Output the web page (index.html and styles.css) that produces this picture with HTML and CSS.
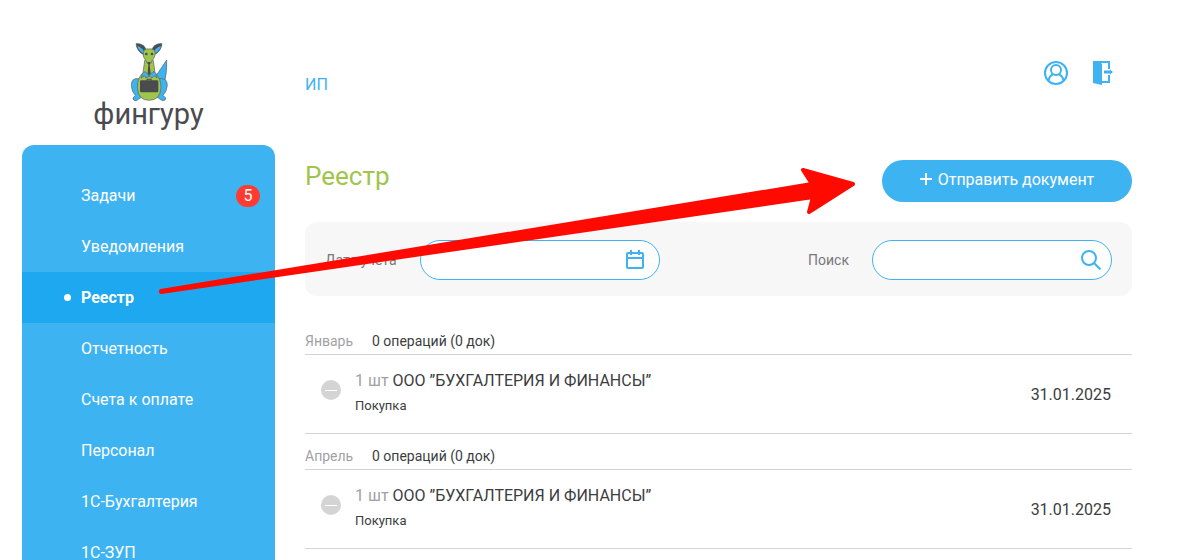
FILE: index.html
```
<!DOCTYPE html>
<html lang="ru">
<head>
    <meta charset="UTF-8">
    <meta name="viewport" content="width=device-width, initial-scale=1.0">
    <title>Реестр — Фингуру</title>
    <link rel="stylesheet" href="styles.css">
</head>
<body>
    <div class="page">
        <header class="header">
            <a class="logo" href="#">
                <svg class="logo-image" viewBox="0 0 138 198" aria-hidden="true">
                    <g stroke="#5a5d60" stroke-width="2" stroke-linejoin="round" stroke-linecap="round">
                        <path fill="#3eb3f2" d="M91 112 L122 66 Q124 96 116 132 Q106 136 96 124Z"/>
                        <path fill="#3eb3f2" d="M38 122 Q16 118 16 142 Q17 162 28 172 L21 180 Q20 188 31 188 L46 178Z"/>
                        <path fill="#3eb3f2" d="M100 122 Q124 118 124 142 Q122 162 111 172 L119 180 Q120 188 109 188 L94 178Z"/>
                        <path fill="#9fc54d" d="M56 68 L51 104 Q34 120 34 148 Q36 187 69 187 Q103 187 105 148 Q105 122 87 104 L82 68Z"/>
                        <path fill="#4a4b4f" d="M54 51 Q32 40 30 17 Q54 15 62 38Z"/>
                        <path fill="#4a4b4f" d="M84 51 Q106 40 108 17 Q84 15 76 38Z"/>
                        <path fill="#3eb3f2" stroke="none" d="M53 47 Q36 37 34 24 Q48 28 55 42Z"/>
                        <path fill="#3eb3f2" stroke="none" d="M86 47 Q103 37 105 24 Q90 28 83 42Z"/>
                        <path fill="#9fc54d" d="M51 46 Q54 30 69 33 Q85 30 88 46 Q87 60 78 68 Q76 78 69 78 Q62 78 60 68 Q51 60 51 46Z"/>
                        <path fill="#3eb3f2" d="M46 119 Q48 102 57 101 Q65 105 69 115 L60 120 L56 114Z"/>
                        <path fill="#3eb3f2" d="M93 119 Q91 102 82 101 Q74 105 70 115 L78 120 L83 114Z"/>
                    </g>
                    <g fill="#4a4b4f">
                        <circle cx="61" cy="48" r="4"/>
                        <circle cx="78" cy="48" r="4"/>
                        <path d="M64 72 H74 L71 80 L74 106 L69 113 L65 106 L67 80Z"/>
                        <path d="M62 128 V122 H77 V128 H74 V125 H65 V128Z"/>
                        <rect x="42" y="127" width="55" height="36" rx="4"/>
                    </g>
                </svg>
                <span class="logo-text">фингуру</span>
            </a>
            <div class="header-main">
                <a class="company" href="#">ИП</a>
                <div class="header-actions">
                    <button class="icon-button" type="button" aria-label="Профиль">
                        <svg width="24" height="24" viewBox="0 0 24 24" fill="none" stroke="currentColor" stroke-width="2">
                            <circle cx="12" cy="12" r="11"/>
                            <circle cx="12" cy="9" r="5"/>
                            <path d="M4.5 20 Q5 15 9 13.500 M19.500 20 Q19 15 15 13.500"/>
                        </svg>
                    </button>
                    <button class="icon-button" type="button" aria-label="Выйти">
                        <svg width="24" height="24" viewBox="0 0 24 24" fill="none" stroke="currentColor" stroke-width="2">
                            <path d="M9 1 H19 V8 M19 14 V21 H9"/>
                            <path d="M3 0 H9 L12 3 V24 L3 22Z" fill="currentColor" stroke="none"/>
                            <path d="M14 11 H21" stroke-width="3"/>
                            <path d="M20 8.500 L23 11 L20 13.500Z" fill="currentColor" stroke="none"/>
                        </svg>
                    </button>
                </div>
            </div>
        </header>

        <nav class="sidebar">
            <a class="menu-item" href="#">Задачи <span class="badge">5</span></a>
            <a class="menu-item" href="#">Уведомления</a>
            <a class="menu-item active" href="#" aria-current="page">Реестр</a>
            <a class="menu-item" href="#">Отчетность</a>
            <a class="menu-item" href="#">Счета к оплате</a>
            <a class="menu-item" href="#">Персонал</a>
            <a class="menu-item" href="#">1С-Бухгалтерия</a>
            <a class="menu-item" href="#">1С-ЗУП</a>
        </nav>

        <main class="content">
            <div class="title-row">
                <h1>Реестр</h1>
                <button class="send-button" type="button">
                    <svg width="12" height="12" viewBox="0 0 12 12" stroke="currentColor" stroke-width="2" aria-hidden="true">
                        <path d="M6 0 V12 M0 6 H12"/>
                    </svg>
                    Отправить документ
                </button>
            </div>

            <form class="filters">
                <div class="field">
                    <label for="date">Дата учета</label>
                    <div class="input-box">
                        <input type="text" id="date">
                        <svg width="20" height="20" viewBox="0 0 20 20" fill="none" stroke="currentColor" stroke-width="2" aria-hidden="true">
                            <rect x="2" y="3" width="16" height="15" rx="1"/>
                            <path d="M2 8 H18 M6 0 V5 M14 0 V5"/>
                        </svg>
                    </div>
                </div>
                <div class="field">
                    <label for="search">Поиск</label>
                    <div class="input-box">
                        <input type="text" id="search">
                        <svg width="20" height="20" viewBox="0 0 20 20" fill="none" stroke="currentColor" stroke-width="2" aria-hidden="true">
                            <circle cx="8" cy="8" r="7"/>
                            <path d="M13 13 L19.500 19.500"/>
                        </svg>
                    </div>
                </div>
            </form>

            <section class="month">
                <h2 class="month-head"><span class="month-name">Январь</span> 0 операций (0 док)</h2>
                <div class="operation">
                    <svg class="status" width="20" height="20" viewBox="0 0 20 20" aria-hidden="true">
                        <circle cx="10" cy="10" r="10" fill="#d4d4d4"/>
                        <path d="M4 10.500 H16" stroke="#fff"/>
                    </svg>
                    <div class="operation-info">
                        <div class="operation-title"><span class="count">1 шт</span> ООО ”БУХГАЛТЕРИЯ И ФИНАНСЫ”</div>
                        <div class="operation-type">Покупка</div>
                    </div>
                    <time class="operation-date" datetime="2025-01-31">31.01.2025</time>
                </div>
            </section>

            <section class="month">
                <h2 class="month-head"><span class="month-name">Апрель</span> 0 операций (0 док)</h2>
                <div class="operation">
                    <svg class="status" width="20" height="20" viewBox="0 0 20 20" aria-hidden="true">
                        <circle cx="10" cy="10" r="10" fill="#d4d4d4"/>
                        <path d="M4 10.500 H16" stroke="#fff"/>
                    </svg>
                    <div class="operation-info">
                        <div class="operation-title"><span class="count">1 шт</span> ООО ”БУХГАЛТЕРИЯ И ФИНАНСЫ”</div>
                        <div class="operation-type">Покупка</div>
                    </div>
                    <time class="operation-date" datetime="2025-01-31">31.01.2025</time>
                </div>
            </section>
        </main>

        <!-- стрелка-подсказка от пункта меню к кнопке -->
        <svg class="hint-arrow" width="700" height="132" viewBox="158 166 700 132" aria-hidden="true">
            <path fill="#ff0a00" stroke="#ff0a00" stroke-width="4" stroke-linejoin="round" d="M161 291 L812 184 L803 170 L853 184 L809 212 L813 197 L161 292Z"/>
        </svg>
    </div>
</body>
</html>
```
FILE: styles.css
```
* {
    box-sizing: border-box;
}
body {
    margin: 0;
    height: 100vh;
    overflow: hidden;
    font-family: Roboto, "Noto Sans", sans-serif;
    font-size: 16px;
    color: #3c3d41;
    background-color: #fff;
}
a {
    text-decoration: none;
}
button {
    font: inherit;
    border: none;
    cursor: pointer;
}
.page {
    position: relative;
    display: grid;
    grid-template-columns: 253px 1fr;
    column-gap: 30px;
    padding: 0 51px 0 22px;
}

/* Шапка */
.header {
    grid-column: 1 / -1;
    display: grid;
    grid-template-columns: subgrid;
    height: 145px;
}
.logo {
    display: flex;
    flex-direction: column;
    align-items: center;
    padding-top: 38px;
    color: #4a4b4f;
}
.logo-image {
    width: 46px;
    height: 66px;
}
.logo-text {
    margin-top: -8px;
    font-size: 29px;
    line-height: 36px;
}
.header-main {
    display: flex;
    justify-content: space-between;
    align-items: flex-start;
    padding: 61px 18px 0 0;
}
.company {
    padding-top: 12px;
    line-height: 24px;
    color: #3eb3f2;
}
.header-actions {
    display: flex;
    gap: 22px;
}
.icon-button {
    display: flex;
    padding: 0;
    background: none;
    color: #3eb3f2;
}

/* Меню */
.sidebar {
    padding-top: 25px;
    background-color: #3eb3f2;
    border-radius: 12px 12px 0 0;
}
.menu-item {
    display: flex;
    align-items: center;
    justify-content: space-between;
    height: 51px;
    padding: 0 15px 0 59px;
    color: #fff;
}
.menu-item.active {
    justify-content: flex-start;
    gap: 10px;
    padding-left: 42px;
    background-color: #1ea8f0;
    font-weight: bold;
}
.menu-item.active::before {
    content: "";
    width: 7px;
    height: 7px;
    border-radius: 50%;
    background-color: #fff;
}
.badge {
    width: 24px;
    border-radius: 11px;
    background-color: #ff3b30;
    line-height: 22px;
    text-align: center;
}

/* Реестр */
.content {
    padding-top: 15px;
}
.title-row {
    display: flex;
    justify-content: space-between;
    align-items: flex-start;
    margin-bottom: 20px;
}
h1 {
    margin: 0;
    font-size: 26px;
    font-weight: normal;
    line-height: 32px;
    color: #9fc54d;
}
.send-button {
    display: flex;
    align-items: center;
    justify-content: center;
    gap: 6px;
    width: 250px;
    height: 42px;
    padding: 0 0 4px;
    border-radius: 21px;
    background-color: #3eb3f2;
    color: #fff;
}
.filters {
    display: flex;
    justify-content: space-between;
    margin-bottom: 23px;
    padding: 18px 20px 16px;
    border-radius: 12px;
    background-color: #f7f7f7;
}
.field {
    display: flex;
    align-items: center;
    gap: 23px;
    font-size: 14px;
    color: #77787b;
}
.input-box {
    display: flex;
    align-items: center;
    width: 240px;
    height: 40px;
    padding: 0 10px 0 15px;
    border: 1px solid #3eb3f2;
    border-radius: 20px;
    background-color: #fff;
    color: #3eb3f2;
}
.field:first-child .input-box {
    padding-right: 14px;
}
.input-box input {
    flex: 1;
    min-width: 0;
    border: none;
    outline: none;
    background: none;
    font: inherit;
    color: #3c3d41;
}
.month-head {
    display: flex;
    margin: 0;
    padding: 12px 0 3px;
    border-bottom: 1px solid #d4d4d4;
    font-size: 14px;
    font-weight: normal;
    line-height: 20px;
}
.month-name {
    width: 67px;
    color: #a0a1a4;
}
.operation {
    display: flex;
    align-items: center;
    padding: 14px 21px 14px 16px;
    border-bottom: 1px solid #d4d4d4;
}
.status {
    align-self: flex-start;
    margin-top: 11px;
}
.operation-info {
    flex: 1;
    padding-left: 14px;
}
.operation-title {
    line-height: 24px;
}
.count {
    color: #a0a1a4;
}
.operation-type {
    font-size: 13px;
    line-height: 26px;
}
.hint-arrow {
    position: absolute;
    top: 166px;
    left: 158px;
}
```
